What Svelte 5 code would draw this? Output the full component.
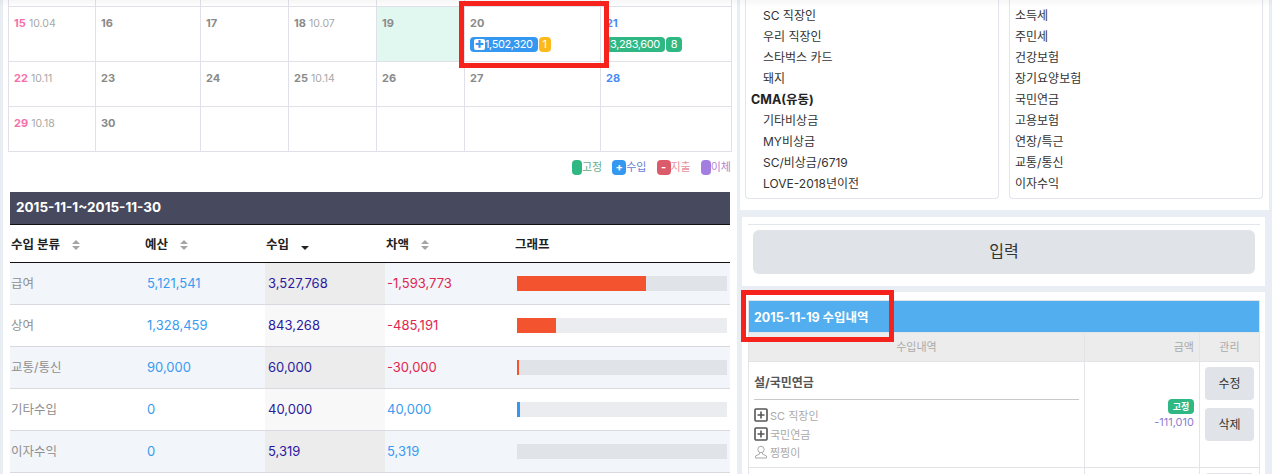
<script>
  const weeks = [
    [{ d: 15, lunar: '10.04', sun: true }, { d: 16 }, { d: 17 }, { d: 18, lunar: '10.07' }, { d: 19, today: true }, { d: 20, income: '1,502,320', count: 1 }, { d: 21, sat: true, fixed: '3,283,600', count: 8 }],
    [{ d: 22, lunar: '10.11', sun: true }, { d: 23 }, { d: 24 }, { d: 25, lunar: '10.14' }, { d: 26 }, { d: 27 }, { d: 28, sat: true }],
    [{ d: 29, lunar: '10.18', sun: true }, { d: 30 }, {}, {}, {}, {}, {}]
  ];

  const rows = [
    { name: '급여', budget: '5,121,541', income: '3,527,768', diff: '-1,593,773', neg: true, bar: 61.5, color: '#f4532f' },
    { name: '상여', budget: '1,328,459', income: '843,268', diff: '-485,191', neg: true, bar: 18.6, color: '#f4532f' },
    { name: '교통/통신', budget: '90,000', income: '60,000', diff: '-30,000', neg: true, bar: 1, color: '#f4532f' },
    { name: '기타수입', budget: '0', income: '40,000', diff: '40,000', neg: false, bar: 1.4, color: '#3497f0' },
    { name: '이자수익', budget: '0', income: '5,319', diff: '5,319', neg: false, bar: 0, color: '#3497f0' }
  ];

  const accounts = [
    { t: 'SC 직장인' }, { t: '우리 직장인' }, { t: '스타벅스 카드' }, { t: '돼지' },
    { t: 'CMA(유동)', head: true }, { t: '기타비상금' }, { t: 'MY비상금' }, { t: 'SC/비상금/6719' },
    { t: 'LOVE-2018년이전' }, { t: 'SC 제일은행(유동)' }
  ];
  const categories = ['소득세', '주민세', '건강보험', '장기요양보험', '국민연금', '고용보험', '연장/특근', '교통/통신', '이자수익'];
</script>

{#snippet sort(active)}
  <svg class="sort" width="10" height="12" viewBox="0 0 10 12">
    {#if !active}<path d="M5 1 9 5H1z" fill="#a5a5a5" />{/if}
    <path d="M1 7h8l-4 4z" fill={active ? '#222' : '#a5a5a5'} />
  </svg>
{/snippet}

{#snippet plusBox()}
  <svg class="plus-box" width="14" height="14" viewBox="0 0 14 14">
    <rect x="1" y="1" width="12" height="12" rx="1" fill="none" stroke="#555" stroke-width="1.6" />
    <path d="M7 3.5v7M3.5 7h7" stroke="#555" stroke-width="1.6" />
  </svg>
{/snippet}

<div class="page">
  <div class="left">
    <table class="calendar">
      <colgroup>
        <col style="width:87px" /><col style="width:105px" /><col style="width:88px" /><col style="width:88px" /><col style="width:88px" /><col style="width:136px" /><col style="width:131px" />
      </colgroup>
      <tbody>
        <tr class="cut">{#each Array(7) as _}<td></td>{/each}</tr>
        {#each weeks as week, w}
          <tr class="week{w}">
            {#each week as c}
              <td class:today={c.today}>
                {#if c.d}
                  <div class="day">
                    <b class:sun={c.sun} class:sat={c.sat}>{c.d}</b>
                    {#if c.lunar}<span class="lunar">{c.lunar}</span>{/if}
                  </div>
                {/if}
                {#if c.income}
                  <div class="badges">
                    <span class="badge blue"><i class="plus">+</i>{c.income}</span><span class="badge yellow">{c.count}</span>
                  </div>
                {/if}
                {#if c.fixed}
                  <div class="badges">
                    <span class="badge green">{c.fixed}</span><span class="badge green count">{c.count}</span>
                  </div>
                {/if}
              </td>
            {/each}
          </tr>
        {/each}
      </tbody>
    </table>

    <div class="legend">
      <span class="lg"><i class="dot" style="background:#2fb883"></i><em style="color:#64ab87">고정</em></span>
      <span class="lg"><i class="dot wide" style="background:#3497f0">+</i><em style="color:#5f80cf">수입</em></span>
      <span class="lg"><i class="dot wide" style="background:#db5b6b">-</i><em style="color:#ea8fa0">지출</em></span>
      <span class="lg"><i class="dot" style="background:#a37ee0"></i><em style="color:#b583cf">이체</em></span>
    </div>

    <div class="summary">
      <h2>2015-11-1~2015-11-30</h2>
      <table>
        <colgroup>
          <col style="width:134px" /><col style="width:121px" /><col style="width:120px" /><col style="width:129px" /><col />
        </colgroup>
        <thead>
          <tr>
            <th class="c1">수입 분류 {@render sort(false)}</th>
            <th class="c2">예산 {@render sort(false)}</th>
            <th class="c3">수입 {@render sort(true)}</th>
            <th class="c4">차액 {@render sort(false)}</th>
            <th class="c5">그래프</th>
          </tr>
        </thead>
        <tbody>
          {#each rows as r}
            <tr>
              <td class="name">{r.name}</td>
              <td class="budget">{r.budget}</td>
              <td class="income">{r.income}</td>
              <td class="diff" class:neg={r.neg}>{r.diff}</td>
              <td class="graph">
                <div class="track"><div class="fill" style="width:{r.bar}%;background:{r.color}"></div></div>
              </td>
            </tr>
          {/each}
        </tbody>
      </table>
    </div>
  </div>

  <div class="right">
    <div class="lists">
      <ul class="box">
        {#each accounts as a}
          <li class:head={a.head}>{a.t}</li>
        {/each}
      </ul>
      <ul class="box cats">
        {#each categories as c}
          <li>{c}</li>
        {/each}
      </ul>
    </div>

    <div class="panel submit">
      <button class="big">입력</button>
    </div>

    <div class="panel detail">
      <table>
        <colgroup><col /><col style="width:115px" /><col style="width:60px" /></colgroup>
        <thead>
          <tr><th class="title" colspan="3">2015-11-19 수입내역</th></tr>
          <tr class="cols"><th>수입내역</th><th class="r">금액</th><th>관리</th></tr>
        </thead>
        <tbody>
          <tr>
            <td class="info">
              <div class="entry">설/국민연금</div>
              <div class="meta">{@render plusBox()}SC 직장인</div>
              <div class="meta">{@render plusBox()}국민연금</div>
              <div class="meta">
                <svg class="plus-box" width="14" height="14" viewBox="0 0 14 14" fill="none" stroke="#a8a8a8">
                  <circle cx="7" cy="4.5" r="3.2" />
                  <path d="M5.5 7.5v1.6L1.5 11v2h11v-2L8.5 9.1V7.5" />
                </svg>찡찡이
              </div>
            </td>
            <td class="amount">
              <span class="tag">고정</span>
              <div class="minus">-111,010</div>
            </td>
            <td class="manage">
              <button>수정</button>
              <button>삭제</button>
            </td>
          </tr>
          <tr class="next"><td></td><td></td><td class="manage"><div class="btn-top"></div></td></tr>
        </tbody>
      </table>
    </div>
  </div>

  <div class="top-shade"></div>
  <div class="mark mark-a"></div>
  <div class="mark mark-b"></div>
</div>

<style>
  :global(body) {
    margin: 0;
    background: #fff;
    overflow: hidden;
  }
  .page {
    position: relative;
    width: 1272px;
    height: 474px;
    overflow: hidden;
    display: flex;
    background: #e9edf4;
    font-family: Inter, "Noto Sans CJK KR", sans-serif;
    font-size: 12px;
    color: #333;
  }
  table {
    border-collapse: collapse;
    table-layout: fixed;
  }
  button {
    font-family: inherit;
    border: none;
    cursor: pointer;
    color: #333;
    background: #e0e3e8;
  }

  /* left side */
  .left {
    width: 734px;
    margin-left: 3px;
    background: #fff;
    padding-left: 5px;
    box-sizing: border-box;
  }
  .calendar {
    width: 723px;
  }
  .calendar td {
    border: 1px solid #e0e1e8;
    vertical-align: top;
    padding: 9px 5px 0;
    box-sizing: border-box;
    overflow: visible;
    white-space: nowrap;
  }
  .calendar .cut td {
    height: 6px;
    padding: 0;
    border-top: none;
  }
  .week0 td { height: 55px; }
  .week1 td, .week2 td { height: 45px; }
  .calendar td.today {
    background: #e1f8f0;
  }
  .day {
    height: 14px;
    line-height: 14px;
    font-size: 11px;
    color: #8a8a8a;
  }
  .day b { font-weight: 700; }
  .day .sun { color: #f76fa8; }
  .day .sat { color: #4a8af4; }
  .lunar {
    font-size: 10.5px;
    color: #a8a8a8;
  }
  .badges {
    display: flex;
    gap: 1px;
    margin-top: 7px;
  }
  .badge {
    display: inline-flex;
    align-items: center;
    height: 15px;
    padding: 0 5px 0 4px;
    border-radius: 4px;
    font-size: 11px;
    letter-spacing: -0.4px;
    color: #fff;
    box-sizing: border-box;
  }
  .blue { background: #3497f0; }
  .yellow { background: #fbb91c; padding: 0 4px; }
  .green { background: #2fb883; }
  .green.count { padding: 0 5px; }
  .plus {
    width: 11px;
    height: 11px;
    background: #fff;
    color: #3497f0;
    border-radius: 2px;
    font-style: normal;
    font-weight: 800;
    font-size: 15px;
    line-height: 10px;
    letter-spacing: 0;
    text-align: center;
  }
  .legend {
    display: flex;
    justify-content: flex-end;
    gap: 10px;
    width: 723px;
    height: 40px;
    padding-top: 8px;
    box-sizing: border-box;
  }
  .lg {
    display: flex;
    align-items: flex-start;
    font-size: 11px;
    line-height: 15px;
  }
  .lg em { font-style: normal; }
  .dot {
    width: 10px;
    height: 15px;
    border-radius: 4px;
    color: #fff;
    font-style: normal;
    font-weight: 700;
    font-size: 11px;
    text-align: center;
  }
  .dot.wide { width: 14px; }

  .summary {
    width: 720px;
    margin-left: 2px;
  }
  .summary h2 {
    margin: 0;
    height: 33px;
    line-height: 31px;
    padding-left: 6px;
    background: #474a5e;
    border-bottom: 1px solid #111;
    box-sizing: border-box;
    color: #fff;
    font-size: 13.5px;
    font-weight: 700;
  }
  .summary table {
    width: 720px;
  }
  .summary th {
    height: 38px;
    text-align: left;
    padding: 0 0 0 1px;
    font-size: 12.5px;
    font-weight: 700;
    color: #222;
    border-bottom: 1px solid #111;
    box-sizing: border-box;
    white-space: nowrap;
  }
  .sort {
    margin-left: 8px;
    vertical-align: -2px;
  }
  .summary td {
    height: 42px;
    padding: 0 0 2px 3px;
    box-sizing: border-box;
    border-bottom: 1px solid #d8dadf;
    font-size: 13px;
    white-space: nowrap;
  }
  .summary tbody tr:nth-child(odd) { background: #f2f5f9; }
  .summary .name { padding-left: 1px; font-size: 12.5px; color: #8f8f8f; }
  .summary .budget { color: #3a9bf0; }
  .summary .income { color: #2a1aa0; background: #f8f8f8; }
  .summary tbody tr:nth-child(odd) .income { background: #ececec; }
  .summary .diff { padding-left: 2px; color: #3a9bf0; }
  .summary .diff.neg { color: #e0264f; }
  .summary td.graph { padding: 0 3px; }
  .track {
    height: 15px;
    background: #ebecef;
  }
  .summary tbody tr:nth-child(odd) .track { background: #e0e3e8; }
  .fill { height: 100%; }

  /* right side */
  .right {
    width: 529px;
    margin-left: 3px;
  }
  .lists {
    display: flex;
    gap: 10px;
    height: 210px;
    padding-left: 5px;
    background: #fff;
    box-sizing: border-box;
  }
  .box {
    flex: none;
    width: 254px;
    height: 199px;
    margin: 0;
    padding: 5px 0 0 17px;
    list-style: none;
    overflow: hidden;
    border: 1px solid #e2e5ea;
    border-top: none;
    border-radius: 0 0 4px 4px;
    box-sizing: border-box;
    font-size: 12px;
    line-height: 21px;
  }
  .box.cats { padding-left: 5px; }
  .box li.head {
    margin-left: -12px;
    font-weight: 700;
    color: #222;
    font-size: 12.5px;
  }
  .panel {
    width: 523px;
    margin: 7px 0 0 2px;
    background: #fff;
    box-sizing: border-box;
  }
  .submit {
    height: 69px;
    padding: 7px 5px 0 6px;
  }
  .submit::before {
    content: '';
    display: block;
    height: 1px;
    background: #e2e5ea;
  }
  .big {
    display: block;
    width: 502px;
    height: 44px;
    margin: 5px 0 0 5px;
    padding: 0 0 4px;
    border-radius: 6px;
    font-size: 16px;
  }
  .detail {
    height: 182px;
    margin-top: 6px;
    padding: 8px 5px 0 6px;
  }
  .detail table {
    width: 512px;
  }
  .detail th, .detail td {
    border: 1px solid #e2e4e8;
    box-sizing: border-box;
  }
  .detail .title {
    height: 32px;
    padding: 0 0 0 5px;
    background: #52aeee;
    color: #fff;
    text-align: left;
    font-size: 12.5px;
    font-weight: 700;
  }
  .cols th {
    height: 29px;
    padding: 0 0 3px;
    background: #ececec;
    font-size: 11px;
    font-weight: 400;
    color: #aaa;
  }
  .cols th.r {
    text-align: right;
    padding-right: 5px;
  }
  .detail td {
    vertical-align: top;
    padding: 0;
  }
  .detail td.info {
    height: 106px;
    padding: 0 5px;
  }
  .entry {
    height: 37px;
    line-height: 41px;
    margin-bottom: 6px;
    border-bottom: 1px solid #c8c8c8;
    font-weight: 700;
    color: #555;
    font-size: 12px;
  }
  .meta {
    display: flex;
    align-items: center;
    height: 18.5px;
    font-size: 11px;
    color: #aaa;
  }
  .plus-box { margin-right: 2px; }
  .detail td.amount {
    vertical-align: middle;
    text-align: right;
    padding: 0 5px;
  }
  .tag {
    display: inline-block;
    width: 26px;
    height: 15px;
    line-height: 15px;
    border-radius: 4px;
    background: #2fb883;
    color: #fff;
    text-align: center;
    font-size: 9px;
    font-weight: 700;
  }
  .minus {
    font-size: 11px;
    color: #8a80d0;
    line-height: 17px;
  }
  .detail td.manage {
    padding: 5px 5px 0;
  }
  .manage button {
    display: block;
    width: 49px;
    height: 33px;
    margin-bottom: 8px;
    padding: 0 0 2px;
    border-radius: 4px;
    font-size: 12px;
  }
  .btn-top {
    width: 49px;
    height: 33px;
    border-radius: 4px;
    background: #e0e3e8;
  }
  .next td { height: 30px; }

  /* shadow of the sticky header above and the two annotation frames */
  .top-shade {
    position: absolute;
    left: 0;
    right: 0;
    top: 0;
    height: 7px;
    background: linear-gradient(rgba(0, 0, 0, 0.035), rgba(0, 0, 0, 0));
    pointer-events: none;
  }
  .mark {
    position: absolute;
    border: 5px solid #f6231c;
    box-sizing: border-box;
  }
  .mark-a {
    left: 459px;
    top: 1px;
    width: 150px;
    height: 67px;
  }
  .mark-b {
    left: 741px;
    top: 290px;
    width: 153px;
    height: 52px;
  }
</style>
